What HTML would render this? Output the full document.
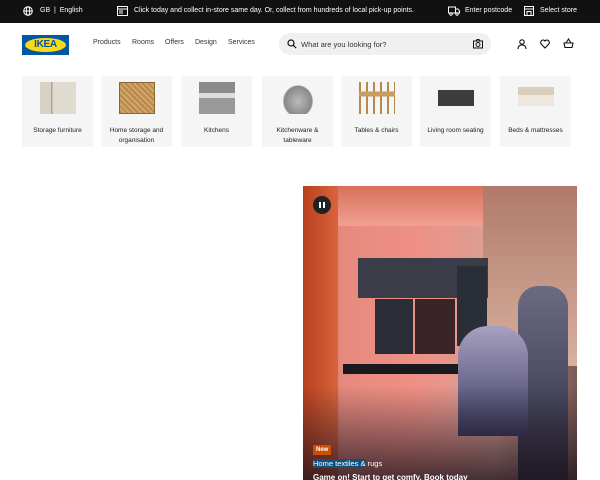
<!DOCTYPE html>
<html><head><meta charset="utf-8"><style>
*{margin:0;padding:0;box-sizing:border-box}
body{width:600px;height:480px;overflow:hidden;background:#fff;font-family:"Liberation Sans",sans-serif;color:#111;position:relative}
.top{position:absolute;left:0;top:0;width:600px;height:23px;background:#111;color:#fff;font-size:7px}
.top span{position:absolute;top:7px;white-space:nowrap}
.hdr{position:absolute;top:23px;left:0;width:600px;height:45px}
.logo{position:absolute;left:22px;top:12px;width:47px;height:20px;background:#0058a3}
.logo div{position:absolute;left:3px;top:3px;width:41px;height:14px;background:#fbd914;border-radius:50%;color:#0058a3;font-weight:bold;font-size:10px;text-align:center;line-height:14px;letter-spacing:-0.3px}
.nav{position:absolute;top:16px;font-size:7px;color:#333}
.search{position:absolute;left:279px;top:10px;width:212px;height:22px;background:#f0f0f0;border-radius:11px}
.search span{position:absolute;left:22px;top:7px;font-size:7.5px;color:#333}
.tile{position:absolute;top:76px;width:71px;height:71px;background:#f5f5f5}
.tile .im{position:absolute;left:18px;top:6px;width:36px;height:32px}
.tile .t{position:absolute;left:0;width:100%;top:50px;font-size:6.5px;text-align:center;line-height:10px;color:#222}
.hero{position:absolute;left:303px;top:186px;width:274px;height:294px;overflow:hidden;
background:linear-gradient(90deg,#c04a2a 0,#c0552e 10px,#e58a7e 14%,#ef8f85 40%,#d9a095 70%,#7b5a55 100%)}
</style></head><body>
<div class="top">
<svg style="position:absolute;left:23px;top:6px" width="10" height="10" viewBox="0 0 10 10" fill="none" stroke="#fff" stroke-width="1"><circle cx="5" cy="5" r="4.3"/><ellipse cx="5" cy="5" rx="1.8" ry="4.3"/><path d="M0.7 5h8.6"/></svg>
<span style="left:40px">GB &nbsp;|&nbsp; English</span>
<svg style="position:absolute;left:117px;top:6px" width="11" height="10" viewBox="0 0 11 10" fill="none" stroke="#fff" stroke-width="1"><rect x="0.5" y="0.5" width="10" height="9"/><path d="M0.5 3h10M2 5h4M2 7h4"/></svg>
<span style="left:134px">Click today and collect in-store same day. Or, collect from hundreds of local pick-up points.</span>
<svg style="position:absolute;left:448px;top:6px" width="12" height="10" viewBox="0 0 12 10" fill="none" stroke="#fff" stroke-width="1"><path d="M0.5 1h7v6h-7zM7.5 3h2.5l1.5 2v2h-4"/><circle cx="3" cy="8" r="1.2"/><circle cx="9" cy="8" r="1.2"/></svg>
<span style="left:465px">Enter postcode</span>
<svg style="position:absolute;left:524px;top:6px" width="10" height="10" viewBox="0 0 10 10" fill="none" stroke="#fff" stroke-width="1"><rect x="0.5" y="0.5" width="9" height="9"/><path d="M0.5 3h9M3 9.5v-4h4v4"/></svg>
<span style="left:540px">Select store</span>
</div>
<div class="hdr">
<div class="logo"><div>IKEA</div></div>
<span class="nav" style="left:93px">Products</span>
<span class="nav" style="left:132px">Rooms</span>
<span class="nav" style="left:165px">Offers</span>
<span class="nav" style="left:195px">Design</span>
<span class="nav" style="left:228px">Services</span>
<div class="search">
<svg style="position:absolute;left:8px;top:6px" width="10" height="10" viewBox="0 0 10 10" fill="none" stroke="#111" stroke-width="1.2"><circle cx="4" cy="4" r="3"/><path d="M6.2 6.2l3 3"/></svg>
<span>What are you looking for?</span>
<svg style="position:absolute;left:194px;top:6px" width="10" height="10" viewBox="0 0 10 10" fill="none" stroke="#111" stroke-width="1"><rect x="0.5" y="2" width="9" height="7"/><path d="M3 2l1-1.5h2L7 2"/><circle cx="5" cy="5.5" r="2"/></svg>
</div>
<svg style="position:absolute;left:517px;top:16px" width="10" height="10" viewBox="0 0 10 10" fill="none" stroke="#111" stroke-width="1.1"><circle cx="5" cy="3" r="2.2"/><path d="M1 10c0-3 2-4 4-4s4 1 4 4"/></svg>
<svg style="position:absolute;left:540px;top:16px" width="10" height="10" viewBox="0 0 10 10" fill="none" stroke="#111" stroke-width="1.1"><path d="M5 9L1.2 5A2.3 2.3 0 015 2a2.3 2.3 0 013.8 3z"/></svg>
<svg style="position:absolute;left:563px;top:15px" width="11" height="11" viewBox="0 0 11 11" fill="none" stroke="#111" stroke-width="1.1"><path d="M1 5h9l-1 4.5H2zM3 5l2.5-4L8 5"/></svg>
</div>

<div class="tile" style="left:22px"><div class="im" style="background:linear-gradient(90deg,#d8d2c4 0 30%,#aaa49a 30% 35%,#e0dbcf 35% 100%)"></div><div class="t">Storage furniture</div></div>
<div class="tile" style="left:101px"><div class="im" style="background:repeating-linear-gradient(45deg,#b7894a 0 2px,#d2a66a 2px 4px);border:1px solid #8e6633"></div><div class="t">Home storage and<br>organisation</div></div>
<div class="tile" style="left:181px"><div class="im" style="background:linear-gradient(#8a8a8a 0 35%,#ddd 35% 50%,#9a9a9a 50%)"></div><div class="t">Kitchens</div></div>
<div class="tile" style="left:262px"><div class="im" style="background:radial-gradient(ellipse at 50% 60%,#bbb 0,#888 55%,transparent 60%)"></div><div class="t">Kitchenware &amp;<br>tableware</div></div>
<div class="tile" style="left:341px"><div class="im" style="background:linear-gradient(transparent 30%,#c89c5c 30% 45%,transparent 45%),repeating-linear-gradient(90deg,#b58a4d 0 2px,transparent 2px 7px)"></div><div class="t">Tables &amp; chairs</div></div>
<div class="tile" style="left:420px"><div class="im" style="background:linear-gradient(transparent 25%,#3b3c3e 25% 75%,transparent 75%)"></div><div class="t">Living room seating</div></div>
<div class="tile" style="left:500px"><div class="im" style="background:linear-gradient(transparent 15%,#d8d0bc 15% 40%,#eee8dc 40% 75%,transparent 75%)"></div><div class="t">Beds &amp; mattresses</div></div>

<div class="hero">
<div style="position:absolute;left:0;top:0;width:35px;height:294px;background:linear-gradient(90deg,#b8401f,#d8643c)"></div>
<div style="position:absolute;left:35px;top:0;width:200px;height:40px;background:linear-gradient(#d8705a,#f0a093)"></div>
<div style="position:absolute;left:180px;top:0;width:94px;height:180px;background:linear-gradient(#b07a6a,#d8b0a0)"></div>
<div style="position:absolute;left:55px;top:72px;width:130px;height:40px;background:#3a3c48"></div>
<div style="position:absolute;left:72px;top:113px;width:38px;height:55px;background:#2a2c38"></div>
<div style="position:absolute;left:112px;top:113px;width:40px;height:55px;background:#3a2428"></div>
<div style="position:absolute;left:154px;top:80px;width:30px;height:80px;background:#2a2e36"></div>
<div style="position:absolute;left:40px;top:178px;width:170px;height:10px;background:#1a1a1e"></div>
<div style="position:absolute;left:215px;top:100px;width:50px;height:194px;border-radius:20px 20px 0 0;background:linear-gradient(#6a6a80,#2e2e44)"></div>
<div style="position:absolute;left:155px;top:140px;width:70px;height:110px;border-radius:30px 30px 0 0;background:linear-gradient(#a8a0c0,#3a3a60)"></div>
<div style="position:absolute;left:0;top:200px;width:274px;height:94px;background:linear-gradient(transparent,rgba(30,20,30,0.8))"></div>
<div style="position:absolute;left:10px;top:10px;width:18px;height:18px;border-radius:50%;background:#222"><div style="position:absolute;left:6px;top:6px;width:2px;height:6px;background:#fff"></div><div style="position:absolute;left:10px;top:6px;width:2px;height:6px;background:#fff"></div></div>
<div style="position:absolute;left:10px;top:259px;background:#ca5008;color:#fff;font-size:6px;font-weight:bold;padding:2px 3px">New</div>
<div style="position:absolute;left:10px;top:273px;font-size:7.5px;color:#fff"><span style="background:#14507a">Home textiles &amp;</span> rugs</div>
<!-- Caption wording is a guess: the reference is blurred at the bottom edge. -->
<div style="position:absolute;left:10px;top:287px;font-size:8px;font-weight:bold;color:#fff;white-space:nowrap">Game on! Start to get comfy. Book today</div>
</div>
</body></html>
